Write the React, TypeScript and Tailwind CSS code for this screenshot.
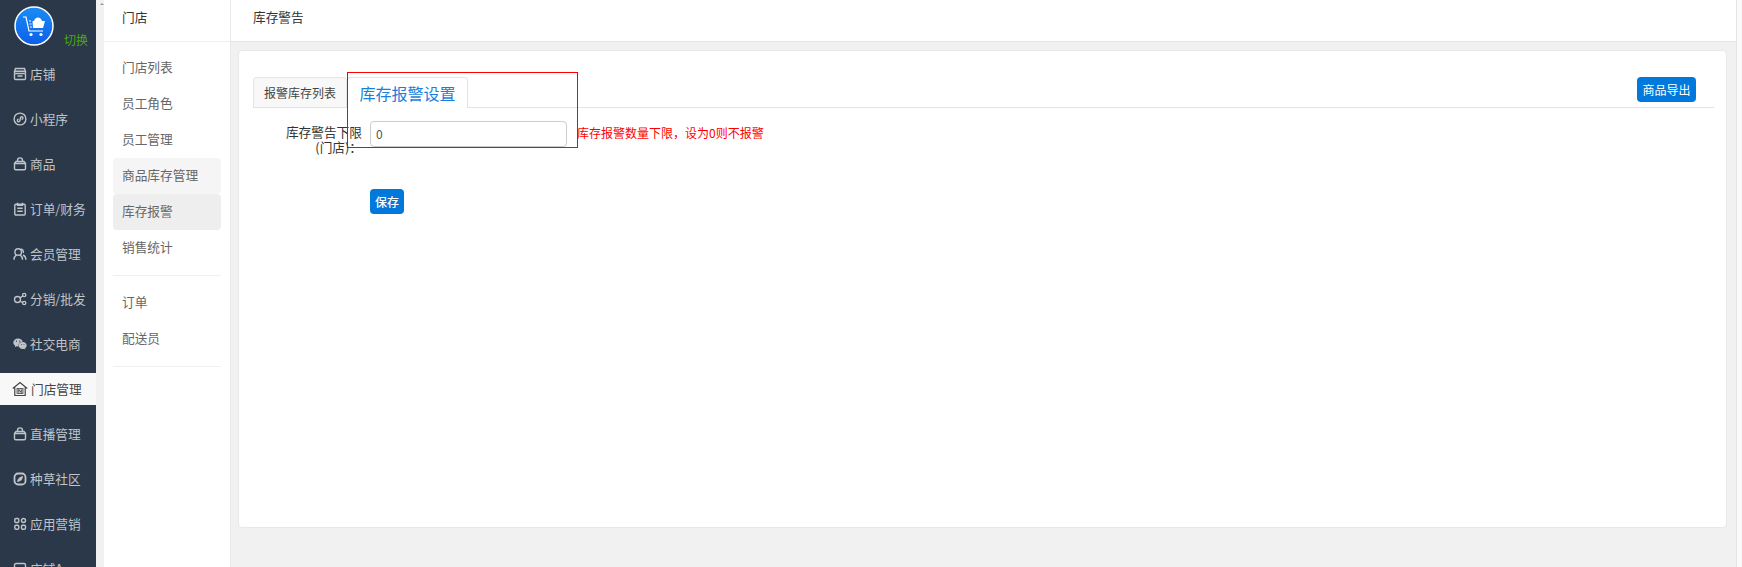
import React from "react";
import { FaWeixin } from "react-icons/fa";

const font = { fontFamily: '"Noto Sans CJK SC", "Noto Sans", sans-serif' };

function Ico({ children }: { children: React.ReactNode }) {
  return (
    <svg viewBox="0 0 14 14" fill="none" stroke="currentColor" strokeWidth="1.4" className="h-[14px] w-[14px] shrink-0 text-[#c0c4c9]">
      {children}
    </svg>
  );
}

const bag = (
  <Ico>
    <path d="M1.500 6.500h11v5a1.300 1.300 0 0 1-1.300 1.300H2.800a1.300 1.300 0 0 1-1.300-1.300zM1.500 6.500 3 4.500h8l1.500 2M4.500 4.500V3.400a2.500 2.500 0 0 1 5 0v1.100" />
  </Ico>
);

const navItems: { label: string; icon: React.ReactNode; active?: boolean }[] = [
  {
    label: "店铺",
    icon: (
      <Ico>
        <path d="M2.500 1.500h9l1.200 3.500a1.600 1.600 0 0 1-1.700 1.500H3A1.600 1.600 0 0 1 1.300 5z" />
        <path d="M1.500 6.500v5a1 1 0 0 0 1 1h9a1 1 0 0 0 1-1v-5M1.500 4.200h11M4.500 9h5" />
      </Ico>
    ),
  },
  {
    label: "小程序",
    icon: (
      <Ico>
        <circle cx="7" cy="7" r="5.900" />
        <path d="M4.300 8.600c0 1.600 2.300 1.600 2.700 0l.4-2.700c.3-1.600 2.500-1.500 2.500 0 0 .9-.7 1.300-1.300 1.300M5.500 7.300c-.6 0-1.200.5-1.200 1.300" />
      </Ico>
    ),
  },
  { label: "商品", icon: bag },
  {
    label: "订单/财务",
    icon: (
      <Ico>
        <rect x="1.800" y="2.200" width="10.400" height="10.800" rx="1" />
        <path d="M4.500 .8v2.400h5V.8M4.300 6.300h5.400M4.300 9.300h5.400" />
      </Ico>
    ),
  },
  {
    label: "会员管理",
    icon: (
      <Ico>
        <circle cx="5.200" cy="5" r="3.300" />
        <path d="M8 1.900a3.300 3.300 0 0 1 2.200 4M1 12.800c0-2.500 1-3.900 2.500-4.900M7 7.900c1.500 1 2.500 2.400 2.500 4.900M10 8c1.800.8 2.800 2.300 3 4.800" />
      </Ico>
    ),
  },
  {
    label: "分销/批发",
    icon: (
      <Ico>
        <circle cx="4.500" cy="7.500" r="3" />
        <circle cx="11.200" cy="3" r="1.600" />
        <circle cx="11.200" cy="11" r="1.600" />
        <path d="M7 5.800 9.800 4M7 9.300l2.800 1" />
      </Ico>
    ),
  },
  {
    label: "社交电商",
    icon: <FaWeixin className="h-[14px] w-[14px] shrink-0 text-[#c0c4c9]" />,
  },
  {
    label: "门店管理",
    active: true,
    icon: (
      <svg viewBox="0 0 16 16" fill="none" stroke="currentColor" strokeWidth="1.200" className="h-4 w-4 shrink-0 text-[#444]">
        <path d="M.8 7.500 8 1.500l7.200 6M2.800 6.500v8h10.400v-8" />
        <rect x="5" y="7.500" width="6" height="5" fill="#ccc" strokeWidth="0.800" />
        <path d="M6.700 11.500v-3l2.600 3v-3" strokeWidth="0.800" />
      </svg>
    ),
  },
  { label: "直播管理", icon: bag },
  {
    label: "种草社区",
    icon: (
      <Ico>
        <rect x="1.500" y="1.500" width="11" height="11" rx="3.500" strokeWidth="1.800" />
        <path d="M4 10c.5-3.500 2.500-5.500 6-6-.2 3.500-2 5.500-6 6z" fill="currentColor" stroke="none" />
      </Ico>
    ),
  },
  {
    label: "应用营销",
    icon: (
      <Ico>
        <rect x="1.800" y="1.500" width="4" height="4" rx="1.200" />
        <rect x="8.500" y="1.500" width="4" height="4" rx="2" />
        <rect x="1.800" y="8.200" width="4" height="4" rx="1.200" />
        <rect x="8.500" y="8.200" width="4" height="4" rx="1.200" />
      </Ico>
    ),
  },
  {
    label: "店铺A",
    icon: (
      <Ico>
        <rect x="1.500" y="1.500" width="11" height="11" rx="1.500" />
      </Ico>
    ),
  },
];

function SubItem({ label, bg = "" }: { label: string; bg?: string }) {
  return <div className={`flex h-9 items-center rounded-sm pb-[2px] pl-[9px] text-[12.7px] text-[#666] ${bg}`}>{label}</div>;
}

export default function App() {
  return (
    <div className="relative flex h-[567px] w-[1742px] overflow-hidden bg-[#f1f1f1]" style={font}>
      {/* Main nav */}
      <aside className="flex w-24 shrink-0 flex-col bg-[#2a3849]">
        <div className="relative h-[58px] shrink-0">
          <svg viewBox="0 0 40 40" className="absolute left-[14px] top-[6px] h-10 w-10">
            <defs>
              <linearGradient id="logo" x1="0" y1="0" x2="0" y2="1">
                <stop offset="0" stopColor="#1a8cf5" />
                <stop offset="1" stopColor="#0d5fe8" />
              </linearGradient>
            </defs>
            <circle cx="20" cy="20" r="19" fill="url(#logo)" stroke="#fff" strokeWidth="1.500" />
            <path d="M9 11h3l3 14h14M15 15h2M15.500 18h2M16 21h2" fill="none" stroke="#fff" strokeWidth="1.200" />
            <path d="M18.500 15H31l-2 7H19z" fill="#fff" />
            <path d="M20 15c1-4 6-5 8 0z" fill="#fff" />
            <circle cx="17" cy="28.500" r="1.600" fill="#fff" />
            <circle cx="27" cy="28.500" r="1.600" fill="#fff" />
          </svg>
          <span className="absolute left-[64px] top-[32px] text-xs text-[#4ca90c]">切换</span>
        </div>
        <nav className="flex flex-col gap-[13px]">
          {navItems.map((item) => (
            <div
              key={item.label}
              className={`flex h-8 shrink-0 items-center gap-[3px] text-[12.7px] ${
                item.active ? "bg-[#f8f8f8] pl-3 text-[#444]" : "pl-[13px] text-[#c0c4c9]"
              }`}
            >
              {item.icon}
              <span className="whitespace-nowrap">{item.label}</span>
            </div>
          ))}
        </nav>
      </aside>

      {/* Sub nav */}
      <aside className="ml-2 flex w-[127px] shrink-0 flex-col border-r border-[#e8e8e8] bg-white">
        <div className="flex h-[42px] shrink-0 items-center border-b border-[#f0f0f0] pb-2 pl-[18px] text-[12.7px] text-[#333]">
          门店
        </div>
        <div className="flex flex-col px-[9px] pt-[8px]">
          <SubItem label="门店列表" />
          <SubItem label="员工角色" />
          <SubItem label="员工管理" />
          <SubItem label="商品库存管理" bg="bg-[#f5f5f5]" />
          <SubItem label="库存报警" bg="bg-[#eeeeee]" />
          <SubItem label="销售统计" />
          <div className="mt-[9px] mb-[9px] border-t border-[#f0f0f0]" />
          <SubItem label="订单" />
          <SubItem label="配送员" />
          <div className="mt-[9px] border-t border-[#f0f0f0]" />
        </div>
      </aside>

      {/* Content */}
      <main className="flex w-[1506px] shrink-0 flex-col border-r border-[#e5e5e5]">
        <div className="flex h-[42px] shrink-0 items-center border-b border-[#e5e5e5] bg-white pb-2 pl-[22px] text-[12.7px] text-[#333]">
          库存警告
        </div>
        <div className="pl-[7px] pr-[9px] pt-2">
          <section className="h-[478px] rounded-sm border border-[#e8e8e8] bg-white pl-[14px] pr-3 pt-[26px]">
            <div className="flex h-[31px] items-start justify-between border-b border-[#e3e3e3] pr-[18px]">
              <div className="flex">
                <div className="flex h-[30px] w-[94px] items-center justify-center rounded-t-sm border border-b-0 border-[#e5e5e5] bg-[#f8f8f8] text-xs text-[#444]">
                  报警库存列表
                </div>
                <div className="flex h-[31px] w-[121px] items-center justify-center rounded-t-sm border border-b-0 border-[#e3e3e3] bg-white text-base text-[#1a7fdc]">
                  库存报警设置
                </div>
              </div>
              <button className="h-[25px] w-[59px] rounded-sm bg-[#0078dc] text-xs text-white">商品导出</button>
            </div>

            <div className="mt-[13px] flex items-start">
              <label className="w-[109px] pt-[3px] text-right text-[12.7px] leading-[15px] text-[#333]">
                库存警告下限
                <br />
                (门店)：
              </label>
              <input
                readOnly
                value="0"
                className="ml-2 h-[26px] w-[197px] rounded-sm border border-[#ccc] px-[5px] pb-[2px] text-xs text-[#555] outline-none"
              />
              <span className="ml-[10px] pt-[4px] text-xs leading-4 text-[#ff0000]">库存报警数量下限，设为0则不报警</span>
            </div>

            <button className="ml-[117px] mt-[35px] block h-[25px] w-[34px] rounded-sm bg-[#0078dc] text-xs font-medium text-white">
              保存
            </button>
          </section>
        </div>
      </main>

      <div className="flex-1 bg-[#fafafa]" />

      {/* Annotation drawn on top of the screenshot */}
      <div className="absolute left-[347px] top-[72px] h-[76px] w-[231px] border border-[#f00]" />
      <div className="absolute left-[100px] top-[3px] h-0 w-0 border-x-2 border-b-2 border-x-transparent border-b-[#999]" />
    </div>
  );
}
